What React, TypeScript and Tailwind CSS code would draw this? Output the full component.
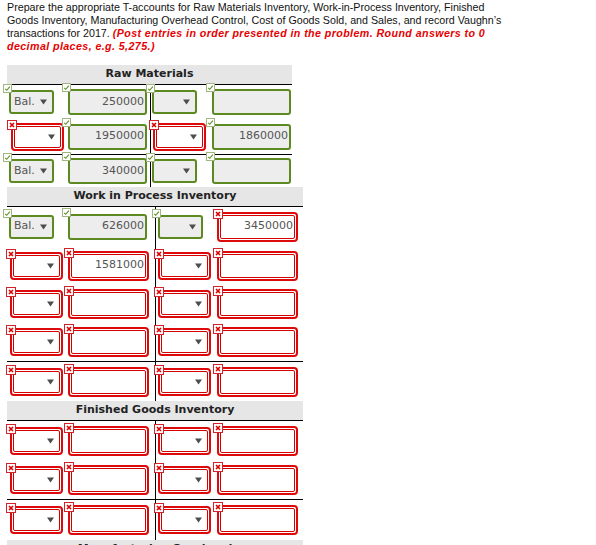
import React from 'react';

type Cell = { k: 's' | 'i'; ok: boolean; v?: string };
type Row = { h: string; line?: boolean; cells: Cell[] };
type Table = { title: string; wide: boolean; rows: Row[] };

const S = (ok: boolean, v = ''): Cell => ({ k: 's', ok, v });
const I = (ok: boolean, v = ''): Cell => ({ k: 'i', ok, v });
const empty = () => [S(false), I(false), S(false), I(false)];

const tables: Table[] = [
  {
    title: 'Raw Materials',
    wide: false,
    rows: [
      { h: 'h-[34px]', cells: [S(true, 'Bal.'), I(true, '250000'), S(true), I(true)] },
      { h: 'h-[35px]', cells: [S(false), I(true, '1950000'), S(false), I(true, '1860000')] },
      { h: 'h-[33px]', line: true, cells: [S(true, 'Bal.'), I(true, '340000'), S(true), I(true)] },
    ],
  },
  {
    title: 'Work in Process Inventory',
    wide: true,
    rows: [
      { h: 'h-[39px]', cells: [S(true, 'Bal.'), I(true, '626000'), S(true), I(false, '3450000')] },
      { h: 'h-[39px]', cells: [S(false), I(false, '1581000'), S(false), I(false)] },
      { h: 'h-[38px]', cells: empty() },
      { h: 'h-[38px]', cells: empty() },
      { h: 'h-[40px]', line: true, cells: empty() },
    ],
  },
  {
    title: 'Finished Goods Inventory',
    wide: true,
    rows: [
      { h: 'h-[39px]', cells: empty() },
      { h: 'h-[39px]', cells: empty() },
      { h: 'h-[41px]', line: true, cells: empty() },
    ],
  },
  {
    title: 'Manufacturing Overhead',
    wide: true,
    rows: [
      { h: 'h-[39px]', cells: empty() },
      { h: 'h-[39px]', cells: empty() },
    ],
  },
];

const mlOk = {
  narrow: ['ml-[2px]', 'ml-[3px]', 'ml-[1px]', 'ml-[5px]'],
  wide: ['ml-[2px]', 'ml-[3px]', 'ml-[2px]', 'ml-[4px]'],
};
const mlBad = {
  narrow: ['ml-[4px]', 'ml-[3px]', 'ml-[2px]', 'ml-[5px]'],
  wide: ['ml-[3px]', 'ml-[3px]', 'ml-[2px]', 'ml-[4px]'],
};

const CheckIcon = () => (
  <svg width="9" height="9" viewBox="0 0 9 9" className="absolute -left-[6px] -top-[6px]">
    <rect x="0.5" y="0.5" width="8" height="8" fill="#fff" stroke="#9fb681" />
    <path d="M2.2 4.9 L3.7 6.3 L6.9 2.7" fill="none" stroke="#5b8f22" strokeWidth="1.1" />
  </svg>
);

const CrossIcon = () => (
  <svg width="10" height="10" viewBox="0 0 10 10" className="absolute -left-[4px] -top-[3px]">
    <rect x="0.5" y="0.5" width="9" height="9" fill="#fff" stroke="#d2232a" />
    <path d="M3 3 L7 7 M7 3 L3 7" stroke="#dd0000" strokeWidth="1.6" />
  </svg>
);

const Arrow = () => (
  <svg width="7" height="6" viewBox="0 0 7 6" className="absolute right-[5px] top-1/2 -translate-y-1/2">
    <path d="M0 0.5 H7 L3.5 5.5 Z" fill="#4d4d4d" />
  </svg>
);

function Content({ c }: { c: Cell }) {
  if (c.k === 's') {
    return (
      <div className="relative flex h-full w-full items-center pl-[3px] text-[#555]">
        {c.v}
        <Arrow />
      </div>
    );
  }
  return (
    <div className="flex h-full w-full items-center justify-end pr-[1px] text-[#555]">{c.v}</div>
  );
}

function Box({ c, ml }: { c: Cell; ml: string }) {
  const size =
    c.k === 's'
      ? c.ok
        ? 'w-[45px] h-[24px]'
        : 'w-[53px] h-[28px]'
      : c.ok
        ? 'w-[79px] h-[26px]'
        : 'w-[81px] h-[30px]';
  return (
    <div className={`relative ${ml} ${size}`}>
      {c.ok ? (
        <div className="h-full w-full rounded-[3px] border-[2.5px] border-[#5d8921] bg-[#ededed]">
          <Content c={c} />
        </div>
      ) : (
        <div className="h-full w-full rounded-[4px] border-2 border-[#dc0a0a] bg-white p-px">
          <div className="h-full w-full rounded-[2px] border border-[#d40000] bg-white">
            <Content c={c} />
          </div>
        </div>
      )}
      {c.ok ? <CheckIcon /> : <CrossIcon />}
    </div>
  );
}

function TAccount({ t }: { t: Table }) {
  const key = t.wide ? 'wide' : 'narrow';
  const width = t.wide ? 'w-[296px]' : 'w-[285px]';
  const cols = t.wide ? 'grid-cols-[58px_90px_58px_90px]' : 'grid-cols-[58px_85px_57px_85px]';
  return (
    <div className={width}>
      <div className="flex h-[20px] items-center justify-center border-b border-black bg-[#e6e6e6] font-bold text-[#222]">
        {t.title}
      </div>
      {t.rows.map((r, ri) => (
        <div key={ri} className={`grid ${cols} ${r.h} ${r.line ? 'border-t border-black' : ''}`}>
          {r.cells.map((c, ci) => (
            <div key={ci} className={`flex items-center ${ci === 2 ? 'border-l border-black' : ''}`}>
              <Box c={c} ml={c.ok ? mlOk[key][ci] : mlBad[key][ci]} />
            </div>
          ))}
        </div>
      ))}
    </div>
  );
}

export default function App() {
  return (
    <div className="h-[545px] w-[596px] overflow-hidden bg-white pl-[7px] pt-px font-['DejaVu_Sans',sans-serif] text-[11px]">
      <p className="mb-[12px] w-[506px] font-['Liberation_Sans',Arial,sans-serif] text-[10.7px] leading-[13px] text-[#111]">
        Prepare the appropriate T-accounts for Raw Materials Inventory, Work-in-Process Inventory, Finished
        Goods Inventory, Manufacturing Overhead Control, Cost of Goods Sold, and Sales, and record Vaughn’s
        transactions for 2017.{' '}
        <span className="font-bold italic tracking-[0.4px] text-[#e60000]">
          (Post entries in order presented in the problem. Round answers to 0 decimal places, e.g. 5,275.)
        </span>
      </p>
      {tables.map((t) => (
        <TAccount key={t.title} t={t} />
      ))}
    </div>
  );
}
